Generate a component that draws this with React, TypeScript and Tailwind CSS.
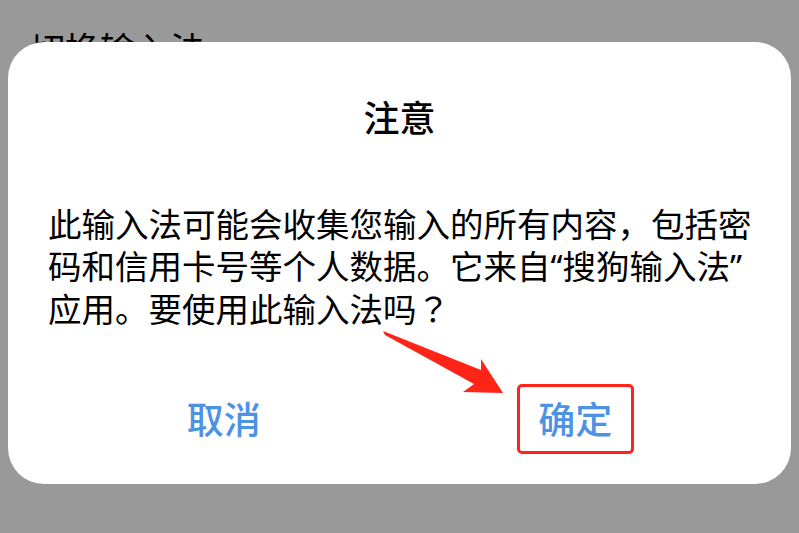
import React from "react";

const font = { fontFamily: '"Noto Sans CJK SC", "Noto Sans", sans-serif' };

export default function App() {
  return (
    <div
      className="relative w-[799px] h-[533px] bg-[#999999] overflow-hidden pt-[30px]"
      style={font}
    >
      <div className="h-[12px] pl-[30px] text-[35px] leading-none text-black whitespace-nowrap">
        切换输入法
      </div>
      <div className="relative z-10 mx-[8px] h-[442px] bg-white rounded-[36px] flex flex-col">
        <div className="pt-[50px] h-[98px] text-center text-[36px] leading-[48px] font-medium text-black">
          注意
        </div>
        <div className="mt-[62px] px-[40px] text-[33.5px] leading-[42px] text-black whitespace-nowrap">
          <div>此输入法可能会收集您输入的所有内容，包括密</div>
          <div>
            码和信用卡号等个人数据。它来自
            <span className="font-['Noto_Sans',sans-serif]">“</span>
            搜狗输入法
            <span className="font-['Noto_Sans',sans-serif]">”</span>
          </div>
          <div>
            应用。要使用此输入法吗
            <span className="font-['Noto_Sans_CJK_TC',sans-serif]">？</span>
          </div>
        </div>
        <div className="mt-[55px] px-[40px] flex">
          <div className="flex-1 flex justify-center">
            <div className="w-[117px] h-[70px] flex items-center justify-center text-[37px] font-medium text-[#4e93e3]">
              取消
            </div>
          </div>
          <div className="flex-1 flex justify-center">
            <div className="w-[117px] h-[70px] border-[3px] border-[#ff2418] rounded-[5px] flex items-center justify-center text-[37px] font-medium text-[#4e93e3]">
              确定
            </div>
          </div>
        </div>
      </div>
      <svg
        className="absolute left-0 top-0 z-20 pointer-events-none"
        width="799"
        height="533"
        viewBox="0 0 799 533"
      >
        <polygon
          points="383,331 481,370 481,359 503,393 463,392 474,384 385,335"
          fill="#ff2418"
        />
      </svg>
    </div>
  );
}
